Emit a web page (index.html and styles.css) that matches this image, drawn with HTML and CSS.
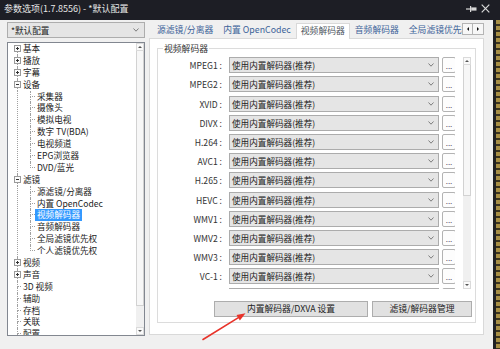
FILE: index.html
```html
<!DOCTYPE html>
<html lang="zh-CN">
<head>
<meta charset="utf-8">
<title>参数选项</title>
<link rel="stylesheet" href="styles.css">
</head>
<body>
<div class="screen">
  <header class="titlebar">
    <span class="title">参数选项(1.7.8556) - *默认配置</span>
    <span class="tb-icons">
      <svg class="pin" width="11" height="8" viewBox="0 0 11 8"><path d="M0 4H4" stroke="#d8d8d8" stroke-width="1.2"/><path d="M4.6 1V7" stroke="#d8d8d8" stroke-width="1.2"/><rect x="5.2" y="2.4" width="5.3" height="3.2" fill="#d8d8d8"/></svg>
      <svg class="close" width="9" height="9" viewBox="0 0 9 9"><path d="M0.7 0.7L8.3 8.3M8.3 0.7L0.7 8.3" stroke="#d8d8d8" stroke-width="1.2"/></svg>
    </span>
  </header>
  <div class="main">
    <div class="window">
      <aside class="sidebar">
        <div class="profile"><span class="profile-text">*默认配置</span><svg class="chev" width="6" height="4" viewBox="0 0 6 4"><polyline points="0.5,0.5 3,3.2 5.5,0.5" fill="none" stroke="#707070" stroke-width="0.9"/></svg></div>
        <div class="tree">
          <div class="tree-list">
            <div class="row l0 first"><span class="b0"><i class="bt"></i><i class="bb"></i><i class="exp plus"></i></span><span class="lbl">基本</span></div>
            <div class="row l0"><span class="b0"><i class="bt"></i><i class="bb"></i><i class="exp plus"></i></span><span class="lbl">播放</span></div>
            <div class="row l0"><span class="b0"><i class="bt"></i><i class="bb"></i><i class="exp plus"></i></span><span class="lbl">字幕</span></div>
            <div class="row l0"><span class="b0"><i class="bt"></i><i class="bb"></i><i class="exp minus"></i></span><span class="lbl">设备</span></div>
            <div class="children">
              <div class="row l1"><span class="b1"><i class="bt"></i><i class="bb"></i></span><span class="lbl">采集器</span></div>
              <div class="row l1"><span class="b1"><i class="bt"></i><i class="bb"></i></span><span class="lbl">摄像头</span></div>
              <div class="row l1"><span class="b1"><i class="bt"></i><i class="bb"></i></span><span class="lbl">模拟电视</span></div>
              <div class="row l1"><span class="b1"><i class="bt"></i><i class="bb"></i></span><span class="lbl">数字 TV(BDA)</span></div>
              <div class="row l1"><span class="b1"><i class="bt"></i><i class="bb"></i></span><span class="lbl">电视频道</span></div>
              <div class="row l1"><span class="b1"><i class="bt"></i><i class="bb"></i></span><span class="lbl">EPG浏览器</span></div>
              <div class="row l1 last"><span class="b1"><i class="bt"></i><i class="bb"></i></span><span class="lbl">DVD/蓝光</span></div>
            </div>
            <div class="row l0"><span class="b0"><i class="bt"></i><i class="bb"></i><i class="exp minus"></i></span><span class="lbl">滤镜</span></div>
            <div class="children">
              <div class="row l1"><span class="b1"><i class="bt"></i><i class="bb"></i></span><span class="lbl">源滤镜/分离器</span></div>
              <div class="row l1"><span class="b1"><i class="bt"></i><i class="bb"></i></span><span class="lbl">内置 OpenCodec</span></div>
              <div class="row l1"><span class="b1"><i class="bt"></i><i class="bb"></i></span><span class="lbl selected">视频解码器</span></div>
              <div class="row l1"><span class="b1"><i class="bt"></i><i class="bb"></i></span><span class="lbl">音频解码器</span></div>
              <div class="row l1"><span class="b1"><i class="bt"></i><i class="bb"></i></span><span class="lbl">全局滤镜优先权</span></div>
              <div class="row l1 last"><span class="b1"><i class="bt"></i><i class="bb"></i></span><span class="lbl">个人滤镜优先权</span></div>
            </div>
            <div class="row l0"><span class="b0"><i class="bt"></i><i class="bb"></i><i class="exp plus"></i></span><span class="lbl">视频</span></div>
            <div class="row l0"><span class="b0"><i class="bt"></i><i class="bb"></i><i class="exp plus"></i></span><span class="lbl">声音</span></div>
            <div class="row l0"><span class="b0"><i class="bt"></i><i class="bb"></i></span><span class="lbl">3D 视频</span></div>
            <div class="row l0"><span class="b0"><i class="bt"></i><i class="bb"></i></span><span class="lbl">辅助</span></div>
            <div class="row l0"><span class="b0"><i class="bt"></i><i class="bb"></i></span><span class="lbl">存档</span></div>
            <div class="row l0"><span class="b0"><i class="bt"></i><i class="bb"></i></span><span class="lbl">关联</span></div>
            <div class="row l0"><span class="b0"><i class="bt"></i><i class="bb"></i></span><span class="lbl">配置</span></div>
          </div>
          <div class="vscroll tree-scroll">
            <div class="sb-btn"><i class="tri up"></i></div>
            <div class="sb-thumb tree-thumb"></div>
            <div class="sb-track"></div>
            <div class="sb-btn"><i class="tri down"></i></div>
          </div>
        </div>
      </aside>
      <section class="content">
        <nav class="tabs">
          <div class="tab-list">
            <span class="tab">源滤镜/分离器</span>
            <span class="tab">内置 OpenCodec</span>
            <span class="tab active">视频解码器</span>
            <span class="tab">音频解码器</span>
            <span class="tab">全局滤镜优先权</span>
          </div>
          <div class="tab-arrows">
            <span class="tab-arrow"><i class="tri left"></i></span>
            <span class="tab-arrow"><i class="tri right"></i></span>
          </div>
        </nav>
        <div class="panel">
          <div class="group">
            <span class="legend">视频解码器</span>
            <div class="list-wrap">
              <div class="rows">
                <div class="drow"><span class="dlabel">MPEG1 :</span><span class="combo"><span class="combo-text">使用内置解码器(推荐)</span><svg class="chev" width="6" height="4" viewBox="0 0 6 4"><polyline points="0.5,0.5 3,3.2 5.5,0.5" fill="none" stroke="#707070" stroke-width="0.9"/></svg></span><span class="more">...</span></div>
                <div class="drow"><span class="dlabel">MPEG2 :</span><span class="combo"><span class="combo-text">使用内置解码器(推荐)</span><svg class="chev" width="6" height="4" viewBox="0 0 6 4"><polyline points="0.5,0.5 3,3.2 5.5,0.5" fill="none" stroke="#707070" stroke-width="0.9"/></svg></span><span class="more">...</span></div>
                <div class="drow"><span class="dlabel">XVID :</span><span class="combo"><span class="combo-text">使用内置解码器(推荐)</span><svg class="chev" width="6" height="4" viewBox="0 0 6 4"><polyline points="0.5,0.5 3,3.2 5.5,0.5" fill="none" stroke="#707070" stroke-width="0.9"/></svg></span><span class="more">...</span></div>
                <div class="drow"><span class="dlabel">DIVX :</span><span class="combo"><span class="combo-text">使用内置解码器(推荐)</span><svg class="chev" width="6" height="4" viewBox="0 0 6 4"><polyline points="0.5,0.5 3,3.2 5.5,0.5" fill="none" stroke="#707070" stroke-width="0.9"/></svg></span><span class="more">...</span></div>
                <div class="drow"><span class="dlabel">H.264 :</span><span class="combo"><span class="combo-text">使用内置解码器(推荐)</span><svg class="chev" width="6" height="4" viewBox="0 0 6 4"><polyline points="0.5,0.5 3,3.2 5.5,0.5" fill="none" stroke="#707070" stroke-width="0.9"/></svg></span><span class="more">...</span></div>
                <div class="drow"><span class="dlabel">AVC1 :</span><span class="combo"><span class="combo-text">使用内置解码器(推荐)</span><svg class="chev" width="6" height="4" viewBox="0 0 6 4"><polyline points="0.5,0.5 3,3.2 5.5,0.5" fill="none" stroke="#707070" stroke-width="0.9"/></svg></span><span class="more">...</span></div>
                <div class="drow"><span class="dlabel">H.265 :</span><span class="combo"><span class="combo-text">使用内置解码器(推荐)</span><svg class="chev" width="6" height="4" viewBox="0 0 6 4"><polyline points="0.5,0.5 3,3.2 5.5,0.5" fill="none" stroke="#707070" stroke-width="0.9"/></svg></span><span class="more">...</span></div>
                <div class="drow"><span class="dlabel">HEVC :</span><span class="combo"><span class="combo-text">使用内置解码器(推荐)</span><svg class="chev" width="6" height="4" viewBox="0 0 6 4"><polyline points="0.5,0.5 3,3.2 5.5,0.5" fill="none" stroke="#707070" stroke-width="0.9"/></svg></span><span class="more">...</span></div>
                <div class="drow"><span class="dlabel">WMV1 :</span><span class="combo"><span class="combo-text">使用内置解码器(推荐)</span><svg class="chev" width="6" height="4" viewBox="0 0 6 4"><polyline points="0.5,0.5 3,3.2 5.5,0.5" fill="none" stroke="#707070" stroke-width="0.9"/></svg></span><span class="more">...</span></div>
                <div class="drow"><span class="dlabel">WMV2 :</span><span class="combo"><span class="combo-text">使用内置解码器(推荐)</span><svg class="chev" width="6" height="4" viewBox="0 0 6 4"><polyline points="0.5,0.5 3,3.2 5.5,0.5" fill="none" stroke="#707070" stroke-width="0.9"/></svg></span><span class="more">...</span></div>
                <div class="drow"><span class="dlabel">WMV3 :</span><span class="combo"><span class="combo-text">使用内置解码器(推荐)</span><svg class="chev" width="6" height="4" viewBox="0 0 6 4"><polyline points="0.5,0.5 3,3.2 5.5,0.5" fill="none" stroke="#707070" stroke-width="0.9"/></svg></span><span class="more">...</span></div>
                <div class="drow"><span class="dlabel">VC-1 :</span><span class="combo"><span class="combo-text">使用内置解码器(推荐)</span><svg class="chev" width="6" height="4" viewBox="0 0 6 4"><polyline points="0.5,0.5 3,3.2 5.5,0.5" fill="none" stroke="#707070" stroke-width="0.9"/></svg></span><span class="more">...</span></div>
                <div class="drow"><span class="dlabel"></span><span class="combo"></span><span class="more"></span></div>
              </div>
              <div class="vscroll list-scroll">
                <div class="sb-btn"><i class="tri up"></i></div>
                <div class="sb-thumb list-thumb"></div>
                <div class="sb-track"></div>
                <div class="sb-btn"><i class="tri down"></i></div>
              </div>
            </div>
            <div class="actions">
              <button class="btn btn-dxva">内置解码器/DXVA 设置</button>
              <button class="btn btn-mgr">滤镜/解码器管理</button>
            </div>
          </div>
        </div>
      </section>
    </div>
    <div class="desk"></div>
  </div>
  <svg class="annot" width="500" height="349" viewBox="0 0 500 349">
    <line x1="203" y1="339.5" x2="240" y2="316.6" stroke="#e8332a" stroke-width="1.6" stroke-linecap="round"/>
    <polygon points="245.5,313.3 239.9,320.6 236.5,315.1" fill="#e8332a"/>
  </svg>
</div>
</body>
</html>
```

FILE: styles.css
```css
* { box-sizing: border-box; }
body { margin: 0; }
i { font-style: normal; }

.screen {
  position: relative;
  width: 500px;
  height: 349px;
  overflow: hidden;
  background: #25262c;
  font-family: "Noto Sans CJK SC", "Noto Sans", sans-serif;
  font-size: 8.6px;
  color: #2a2a2a;
}

/* title bar */
.titlebar {
  height: 20px;
  background: #1d1e25;
  display: flex;
  align-items: center;
  padding: 0 10px 3px 4px;
  color: #e8e8e8;
  font-size: 9px;
}
.title { flex: 1; white-space: nowrap; }
.tb-icons { display: flex; align-items: center; gap: 4px; }
.pin { display: block; }
.close { display: block; }

.main { display: flex; height: 329px; }

.window {
  width: 493px;
  background: #f0f0f0;
  display: flex;
  gap: 4px;
  padding-left: 7px;
}
.desk {
  flex: 1;
  background:
    repeating-linear-gradient(180deg, transparent 0 4px, #3a3320 4px 6px) 3px 0 / 4px 100% no-repeat,
    linear-gradient(90deg, #1f2024 0 3px, #a88f45 3px);
}

/* sidebar */
.sidebar {
  width: 138px;
  display: flex;
  flex-direction: column;
  padding-top: 2px;
}
.profile {
  height: 16px;
  border: 1px solid #adadad;
  background: #e5e5e5;
  display: flex;
  align-items: center;
  padding: 0 5px 0 3px;
  color: #222;
}
.profile-text { flex: 1; }
.chev { display: block; flex: none; }

.tree {
  margin-top: 4px;
  height: 294px;
  border: 1px solid #828790;
  background: #fff;
  display: flex;
  overflow: hidden;
}
.tree-list {
  flex: 1;
  min-width: 0;
  overflow: hidden;
}
.row {
  height: 11.9px;
  line-height: 11.9px;
  display: flex;
  align-items: stretch;
  white-space: nowrap;
  color: #222;
}
.row.l0 { padding-left: 9px; }
.row.l1 { padding-left: 22px; }

.b0, .b1 {
  display: grid;
  grid-template-rows: 1fr 1fr;
  flex: none;
}
.b0 { width: 4px; }
.b1 { width: 5px; }
.bt {
  grid-row: 1;
  grid-column: 1;
  border-left: 1px dotted #a0a0a0;
  border-bottom: 1px dotted #a0a0a0;
}
.bb {
  grid-row: 2;
  grid-column: 1;
  border-left: 1px dotted #a0a0a0;
}
.first .bt { border-left-color: transparent; }
.last .bb { border-left-color: transparent; }
.exp {
  grid-row: 1 / 3;
  grid-column: 1;
  align-self: center;
  justify-self: start;
  margin-left: -3px;
  width: 7px;
  height: 7px;
  border: 1px solid #9a9a9a;
  background: #fbfbfb;
  position: relative;
  z-index: 1;
}
.exp.plus {
  background:
    linear-gradient(#333, #333) center / 3px 1px no-repeat,
    linear-gradient(#333, #333) center / 1px 3px no-repeat,
    #fbfbfb;
}
.exp.minus {
  background: linear-gradient(#333, #333) center / 3px 1px no-repeat, #fbfbfb;
}
.children {
  background: linear-gradient(#a0a0a0 50%, transparent 50%) 9px 0 / 1px 2px repeat-y;
}
.lbl { padding: 0 2px; }
.lbl.selected { background: #3399ff; color: #fff; }

/* scrollbars */
.vscroll {
  width: 8px;
  flex: none;
  display: flex;
  flex-direction: column;
  background: #f0f0f0;
}
.sb-btn {
  height: 8px;
  flex: none;
  display: flex;
  align-items: center;
  justify-content: center;
  background: #fafafa;
  border: 1px solid #dadada;
}
.sb-thumb {
  flex: none;
  background: #f7f7f7;
  border: 1px solid #d2d2d2;
  border-top: 0;
}
.sb-track { flex: 1; }
.tree-thumb { height: 255px; }
.list-thumb { height: 131px; }

.tri { width: 0; height: 0; display: block; }
.tri.up { border-left: 2px solid transparent; border-right: 2px solid transparent; border-bottom: 2px solid #555; }
.tri.down { border-left: 2px solid transparent; border-right: 2px solid transparent; border-top: 2px solid #555; }
.tri.left { border-top: 2.5px solid transparent; border-bottom: 2.5px solid transparent; border-right: 2.5px solid #111; }
.tri.right { border-top: 2.5px solid transparent; border-bottom: 2.5px solid transparent; border-left: 2.5px solid #111; }

/* content */
.content {
  width: 335px;
  display: flex;
  flex-direction: column;
}
.tabs {
  height: 19px;
  display: flex;
}
.tab-list {
  flex: 1;
  min-width: 0;
  display: flex;
  align-items: flex-end;
  overflow: hidden;
  padding-left: 3px;
}
.tab {
  flex: none;
  height: 14px;
  line-height: 14px;
  margin-bottom: 2px;
  padding: 0 5px;
  font-size: 8.8px;
  color: #3c6399;
  white-space: nowrap;
}
.tab.active {
  height: 16px;
  line-height: 14px;
  margin-bottom: 0;
  padding: 0 4px;
  background: #fff;
  border: 1px solid #d9d9d9;
  border-bottom: 0;
  color: #4e5560;
  position: relative;
  z-index: 1;
}
.tab-arrows {
  display: flex;
  align-self: flex-start;
  margin-top: 3px;
}
.tab-arrow {
  width: 11px;
  height: 12px;
  border: 1px solid #b4b4b4;
  background: #f7f7f7;
  display: flex;
  align-items: center;
  justify-content: center;
}
.tab-arrow + .tab-arrow { border-left: 0; }

.panel {
  margin-top: -1px;
  height: 297px;
  border: 1px solid #d9d9d9;
  background: #fff;
  padding: 9px 7px 11px 7px;
  display: flex;
}
.group {
  flex: 1;
  border: 1px solid #dcdcdc;
  display: flex;
  flex-direction: column;
}
.legend {
  align-self: flex-start;
  margin: -6px 0 0 5px;
  padding: 0 1px;
  background: #fff;
  font-size: 8.8px;
  line-height: 11px;
  color: #333;
}
.list-wrap {
  margin-top: 3px;
  height: 232px;
  display: flex;
}
.rows {
  width: 297px;
  flex: none;
  overflow: hidden;
  padding-top: 0.3px;
}
.drow {
  height: 16px;
  margin-bottom: 3.2px;
  display: flex;
  align-items: stretch;
}
.dlabel {
  width: 64px;
  flex: none;
  text-align: right;
  line-height: 16px;
  color: #333;
  white-space: nowrap;
}
.combo {
  margin-left: 7px;
  width: 210px;
  flex: none;
  border: 1px solid #acacac;
  background: #e5e5e5;
  display: flex;
  align-items: center;
  padding: 0 4px 0 2px;
  color: #222;
}
.combo-text { flex: 1; white-space: nowrap; }
.more {
  margin-left: 3px;
  width: 14px;
  flex: none;
  border: 1px solid #b3b3b3;
  border-radius: 2px;
  background: #fdfdfd;
  text-align: center;
  font-size: 8px;
  line-height: 15px;
  color: #5a4d66;
}
.list-scroll { margin-left: 8px; }

.actions {
  margin-top: 11.7px;
  display: flex;
  justify-content: flex-end;
  gap: 4px;
  padding-right: 3px;
}
.btn {
  height: 16px;
  padding: 0;
  border: 1px solid #adadad;
  background: #e1e1e1;
  font-family: "Noto Sans CJK SC", "Noto Sans", sans-serif;
  font-size: 8.8px;
  color: #222;
  line-height: 14px;
}
.btn-dxva { width: 154px; }
.btn-mgr { width: 100px; }

.annot {
  position: absolute;
  left: 0;
  top: 0;
  pointer-events: none;
}
```
